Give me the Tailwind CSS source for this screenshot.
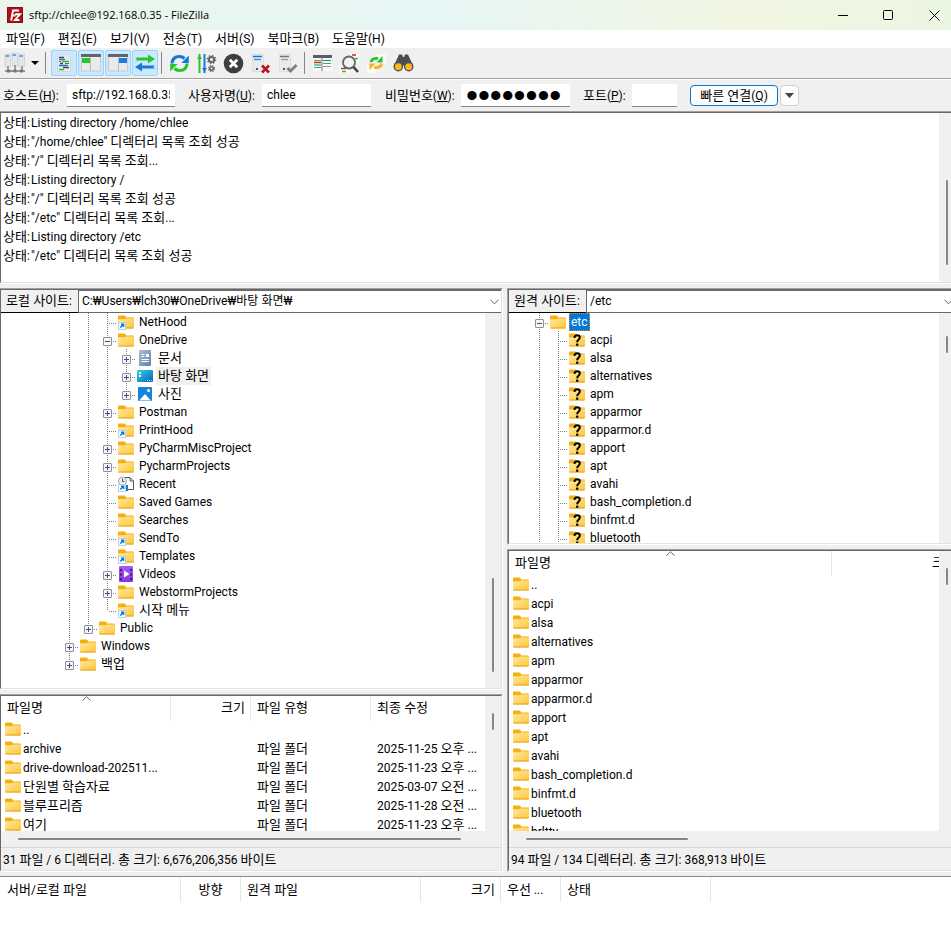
<!DOCTYPE html>
<html lang="ko">
<head>
<meta charset="utf-8">
<title>sftp://chlee@192.168.0.35 - FileZilla</title>
<script src="https://cdn.jsdelivr.net/npm/@tailwindcss/browser@4"></script>
</head>
<body class="bg-[#f0f0f0] text-black text-[12px] leading-[18px] font-['Roboto','Noto_Sans_CJK_KR',sans-serif] overflow-hidden">
<svg class="absolute size-0" aria-hidden="true">
  <defs>
    <linearGradient id="fg" x1="0" y1="0" x2="1" y2="1"><stop offset="0" stop-color="#ffe9a2"/><stop offset="1" stop-color="#ffc636"/></linearGradient>
    <linearGradient id="dg" x1="0" y1="0" x2="1" y2="1"><stop offset="0" stop-color="#35d3dc"/><stop offset="1" stop-color="#0a62c0"/></linearGradient>
    <linearGradient id="vg" x1="0" y1="0" x2="0" y2="1"><stop offset="0" stop-color="#a35cf0"/><stop offset="1" stop-color="#8338dd"/></linearGradient>
    <linearGradient id="tg" x1="0" y1="0" x2="1" y2="1"><stop offset="0" stop-color="#a9bfd8"/><stop offset="1" stop-color="#5f7fa8"/></linearGradient>
    <symbol id="folder" viewBox="0 0 16 16">
      <path d="M0 6V2.6Q0 1.6 1 1.6H6.2Q7 1.6 7.5 2.3L8.3 3.4H15Q16 3.4 16 4.4V7H0Z" fill="#f4b00c"/>
      <path d="M0 6Q0 5.2.8 5.2H6.4Q7.2 5.2 8 4.4H15Q16 4.2 16 5V13.4Q16 14.4 15 14.4H1Q0 14.4 0 13.4Z" fill="url(#fg)"/>
      <path d="M.4 14H15.6" stroke="#e5a01e"/>
    </symbol>
    <symbol id="badge" viewBox="0 0 16 16">
      <rect x=".5" y="8.5" width="7" height="7" fill="#fff" stroke="#b9cfe6"/>
      <path d="M2.2 13.6L5 10.8M3 10.3H5.6V13" stroke="#0078d4" stroke-width="1.4" fill="none"/>
    </symbol>
    <symbol id="link" viewBox="0 0 16 16"><use href="#folder"/><use href="#badge"/></symbol>
    <symbol id="unknown" viewBox="0 0 16 16"><use href="#folder"/>
      <path d="M5.4 5.8Q5.6 3.2 8.2 3.2Q10.8 3.2 10.8 5.5Q10.8 6.8 9.4 7.8Q8.2 8.6 8.2 10.2" fill="none" stroke="#000" stroke-width="2"/><rect x="7.1" y="11.6" width="2.2" height="2.2"/></symbol>
    <symbol id="doc" viewBox="0 0 16 16"><rect x="2" y="0" width="12" height="16" rx="1" fill="url(#tg)"/><path d="M4.500 4.500H7.500M4.500 6.500H7.500M4.500 9.500H12M4.500 11.500H12" stroke="#fff"/><rect x="9" y="4" width="3" height="3" fill="#fff"/></symbol>
    <symbol id="desktop" viewBox="0 0 16 16"><rect x="0" y="2" width="16" height="12" rx="1" fill="url(#dg)"/><path d="M2 4H4V6H2ZM2 7H4V9H2Z" fill="#fff"/><path d="M10 12.500H15" stroke="#9fe4f4" stroke-dasharray="1 1"/></symbol>
    <symbol id="picture" viewBox="0 0 16 16"><rect x="1" y="1" width="14" height="14" rx="1" fill="#1683d8"/><path d="M2.200 14.500L8 8L13.800 14.500Z" fill="#fff"/><circle cx="11.500" cy="4.500" r="1.500" fill="#fff"/></symbol>
    <symbol id="recent" viewBox="0 0 16 16"><path d="M6.500 1.500H12L15.500 5V13.500H6.500Z" fill="#fff" stroke="#555"/><path d="M12 1.500V5H15.500" fill="none" stroke="#555"/><path d="M9 9V15" stroke="#1976d2" stroke-width="2"/><circle cx="4.500" cy="5" r="4" fill="#eee" stroke="#aaa"/><path d="M4.500 2.500V5.500H6.500" fill="none" stroke="#555"/><use href="#badge"/></symbol>
    <symbol id="video" viewBox="0 0 16 16"><rect x="1" y="0" width="14" height="16" rx="1" fill="url(#vg)"/><path d="M3 3V14M13 3V14" stroke="#4a1590" stroke-width="2" stroke-dasharray="2 2.500"/><path d="M6 4.500L11.500 8L6 11.500Z" fill="#fff"/></symbol>
  </defs>
</svg>

<div class="flex flex-col h-screen">
  <header class="flex items-center h-[30px] shrink-0 pl-[7px] bg-[linear-gradient(90deg,#eaf6ec_0%,#e9f6ef_20%,#e6f6f5_45%,#f1f6e2_78%,#ebf6e3_100%)]">
    <svg class="size-4" viewBox="0 0 16 16" aria-hidden="true"><rect width="16" height="16" rx="1" fill="#b01117"/><path d="M.5 15.500V.5H15.500V15.500Z" fill="none" stroke="#8e0b10"/><path d="M4.200 13.500L6 3.500H12M5 8.500H8.500M8.200 7.200H13L8 13H12.500" fill="none" stroke="#fff" stroke-width="1.900"/></svg>
    <h1 class="flex-1 pl-[6px] text-[11px] font-['Open_Sans']">sftp://chlee@192.168.0.35 - FileZilla</h1>
    <div class="flex pr-[2px]">
      <button aria-label="최소화" class="w-[45px] grid place-items-center"><svg class="size-[11px]" viewBox="0 0 11 11"><path d="M0 5.500H10" stroke="#000"/></svg></button>
      <button aria-label="최대화" class="w-[45px] grid place-items-center"><svg class="size-[11px]" viewBox="0 0 11 11"><rect x=".5" y=".5" width="9" height="9" rx="1" fill="none" stroke="#000"/></svg></button>
      <button aria-label="닫기" class="w-[45px] pl-[2px] -mr-[7px] grid place-items-center"><svg class="size-[11px]" viewBox="0 0 11 11"><path d="M.5 .5L10.500 10.500M10.500 .5L.5 10.500" stroke="#000"/></svg></button>
    </div>
  </header>

  <nav class="flex h-[18px] shrink-0 bg-white pl-[6px] gap-[13px] leading-[19px]">
    <button>파일(F)</button><button>편집(E)</button><button>보기(V)</button><button>전송(T)</button><button>서버(S)</button><button>북마크(B)</button><button>도움말(H)</button>
  </nav>

  <div class="flex items-center h-[31px] shrink-0 border-b border-[#a0a0a0] pl-[4px]">
    <button aria-label="사이트 관리자" class="w-[22px]"><svg class="w-[22px] h-[22px]" viewBox="0 0 22 22"><g fill="#e4e6e8" stroke="#c4c8cc" stroke-width=".6"><rect x="1" y="2" width="5.500" height="13"/><rect x="8" y="1" width="5.500" height="13"/><rect x="15" y="2" width="5.500" height="13"/></g><path d="M1.500 4H5M8.500 3H12M15.500 4H19" stroke="#3a8ee0" stroke-width="1.500"/><path d="M4 14V20M11 13V20M18 14V20" stroke="#888" stroke-width="1.500"/><path d="M1 19H21" stroke="#777" stroke-width="1.500"/><path d="M3 17.500H6V20.500H3ZM9.500 17.500H12.500V20.500H9.500ZM16 17.500H19V20.500H16Z" fill="#777"/></svg></button>
    <button aria-label="사이트 목록" class="w-[18px] grid place-items-center"><svg class="w-2 h-1" viewBox="0 0 8 4"><path d="M0 0H8L4 4Z"/></svg></button>
    <span class="w-px h-[22px] bg-[#868686] mx-[1px]"></span>
    <div class="flex items-center pl-[4px] pr-[3px] gap-px">
      <button aria-label="메시지 로그" class="size-[26px] grid place-items-center rounded-[2px] border border-[#99d1ff] bg-[#cce8ff]"><svg class="size-5" viewBox="0 0 20 20"><path d="M3.500 1.500H13L16.500 5V18.500H3.500Z" fill="#e9eaec" stroke="#d4d8dc"/><path d="M5 4.500H10M6 10.500H9M9 14.500H15" stroke="#444" stroke-width="1.300"/><path d="M5 6.500H11M5 12.500H14" stroke="#1f74d2" stroke-width="1.300"/><path d="M8 8.500H15M5 16.500H10" stroke="#28b83c" stroke-width="1.300"/><path d="M11 10.500H15M5 8.500H7" stroke="#666"/></svg></button>
      <button aria-label="로컬 디렉터리 트리" class="size-[26px] grid place-items-center rounded-[2px] border border-[#99d1ff] bg-[#cce8ff]"><svg class="size-5" viewBox="0 0 20 20"><rect x=".5" y="2" width="19" height="16" fill="#e9eaec" stroke="#c8cbce"/><rect x="0" y="1" width="20" height="3" fill="#62666b"/><rect x="1" y="5" width="8" height="5" fill="#27c52c"/><path d="M9.500 4V18" stroke="#bbb"/></svg></button>
      <button aria-label="원격 디렉터리 트리" class="size-[26px] grid place-items-center rounded-[2px] border border-[#99d1ff] bg-[#cce8ff]"><svg class="size-5" viewBox="0 0 20 20"><rect x=".5" y="2" width="19" height="16" fill="#e9eaec" stroke="#c8cbce"/><rect x="0" y="1" width="20" height="3" fill="#62666b"/><rect x="11" y="5" width="8" height="5" fill="#1f7be0"/><path d="M10.500 4V18" stroke="#bbb"/></svg></button>
      <button aria-label="전송 대기열" class="size-[26px] grid place-items-center rounded-[2px] border border-[#99d1ff] bg-[#cce8ff]"><svg class="size-5" viewBox="0 0 20 20"><path d="M0 4.500H13V1.500L20 6L13 10.500V7.500H0L2 6Z" fill="#27c52c"/><path d="M20 12.500H7V9.500L0 14L7 18.500V15.500H20L18 14Z" fill="#1a76d8"/></svg></button>
    </div>
    <span class="w-px h-[22px] bg-[#868686] mr-[7px]"></span>
    <div class="flex items-center gap-[6px]">
      <button aria-label="새로 고침"><svg class="size-[21px]" viewBox="0 0 21 21"><path d="M3 10.500Q3.500 3.500 10.500 3.500Q13.500 3.500 15.500 5.500" fill="none" stroke="#1a76d8" stroke-width="3.200"/><path d="M19.800 2.500V10H12.300Z" fill="#1a76d8"/><path d="M18 10.500Q17.500 17.500 10.500 17.500Q7.500 17.500 5.500 15.500" fill="none" stroke="#27c52c" stroke-width="3.200"/><path d="M1.200 18.500V11H8.700Z" fill="#27c52c"/></svg></button>
      <button aria-label="대기열 처리"><svg class="size-[21px]" viewBox="0 0 21 21"><path d="M3.500 1V20" stroke="#27c52c" stroke-width="2"/><path d="M1 6H6L3.500 2Z" fill="#27c52c"/><path d="M8.500 1V20" stroke="#1a76d8" stroke-width="2"/><path d="M6 15H11L8.500 19Z" fill="#1a76d8"/><g fill="none" stroke="#666"><circle cx="15.500" cy="6.500" r="2.600" stroke-width="2"/><circle cx="15.500" cy="6.500" r="4" stroke-width="1.500" stroke-dasharray="1.500 1.600"/><circle cx="15.500" cy="15.500" r="1.800" stroke-width="1.600"/><circle cx="15.500" cy="15.500" r="3" stroke-width="1.200" stroke-dasharray="1.200 1.200"/></g></svg></button>
      <button aria-label="취소"><svg class="size-[21px]" viewBox="0 0 21 21"><circle cx="10.500" cy="10.500" r="9.800" fill="#3c3f42"/><path d="M6.800 6.800L14.200 14.200M14.200 6.800L6.800 14.200" stroke="#fff" stroke-width="2.800"/></svg></button>
      <button aria-label="연결 끊기"><svg class="size-[21px]" viewBox="0 0 21 21"><rect x="2.500" y="1.500" width="11" height="17" fill="#e8eaec" stroke="#dcdfe2"/><path d="M3 3.500H12" stroke="#1a76d8" stroke-width="1.500"/><path d="M4 6.500H11" stroke="#3d8ae0" stroke-width="1.300"/><rect x="6" y="15" width="2" height="2" fill="#555"/><path d="M12 12.500L19 19.500M19 12.500L12 19.500" stroke="#b8141c" stroke-width="2.600"/></svg></button>
      <button aria-label="다시 연결"><svg class="size-[21px]" viewBox="0 0 21 21"><rect x="2.500" y="1.500" width="11" height="17" fill="#e8eaec" stroke="#dcdfe2"/><path d="M3 3.500H12" stroke="#777" stroke-width="1.500"/><path d="M4 6.500H11" stroke="#999" stroke-width="1.300"/><rect x="6" y="15" width="2" height="2" fill="#555"/><path d="M10.500 15L13.500 18L19.500 12" fill="none" stroke="#7c8084" stroke-width="2.800"/></svg></button>
    </div>
    <span class="w-px h-[22px] bg-[#868686] ml-[6px] mr-[7px]"></span>
    <div class="flex items-center gap-[6px]">
      <button aria-label="필터"><svg class="size-[21px]" viewBox="0 0 21 21"><rect x="1" y="2" width="19" height="16" fill="#fafafa"/><rect x="1" y="2" width="19" height="3" fill="#5a5e62"/><path d="M2 7.500H9M2 14.500H9M11 10.500H19" stroke="#27c52c" stroke-width="1.200"/><path d="M2 9.500H9" stroke="#d1242c" stroke-width="1.500"/><path d="M2 12H9M11 7.500H19" stroke="#1a76d8" stroke-width="1.200"/><path d="M11 13.500H19" stroke="#999"/><path d="M10 5V18" stroke="#777"/></svg></button>
      <button aria-label="디렉터리 비교"><svg class="size-[21px]" viewBox="0 0 21 21"><path d="M11 1H20V10H11ZM1 12H10V20H1Z" fill="#fafafa"/><path d="M13 2H17" stroke="#d1242c" stroke-width="1.500"/><path d="M16 5.500H19M3 18.500H7" stroke="#27c52c" stroke-width="1.500"/><path d="M2 15.500H7" stroke="#d1242c" stroke-width="1.500"/><circle cx="10" cy="9.500" r="6" fill="#eef3f6" stroke="#62666b" stroke-width="1.800"/><path d="M14.500 14L19 19" stroke="#3c3f42" stroke-width="2.600"/></svg></button>
      <button aria-label="동기화 탐색"><svg class="size-[21px]" viewBox="0 0 21 21"><path d="M11 1H20V10H11ZM1 12H10V20H1Z" fill="#fafafa"/><path d="M16.500 3V9.500H10.500Z" fill="#27c52c"/><path d="M5 9Q6 4.800 12 5.500" fill="none" stroke="#27c52c" stroke-width="2.800"/><path d="M15.500 10.500Q15 15 8 14.500" fill="none" stroke="#f5b417" stroke-width="2.800"/><path d="M3.500 17V10.500H9.500Z" fill="#f5b417"/></svg></button>
      <button aria-label="파일 검색"><svg class="size-[21px]" viewBox="0 0 21 21"><path d="M6 1.500H9L10 4H11L12 1.500H15L20 12.500H1Z" fill="#4b4f54"/><circle cx="5.300" cy="13.700" r="4.800" fill="#4b4f54"/><circle cx="15.700" cy="13.700" r="4.800" fill="#4b4f54"/><circle cx="5.300" cy="13.700" r="3.400" fill="#fbb916"/><circle cx="15.700" cy="13.700" r="3.400" fill="#fbb916"/></svg></button>
    </div>
  </div>

  <form class="flex items-center h-[32px] shrink-0 border-t border-white pl-[3px]" onsubmit="return false">
    <label for="host" class="w-[64px] shrink-0">호스트(<u>H</u>):</label>
    <input id="host" value="sftp://192.168.0.35" class="w-[108px] h-[23px] px-[5px] bg-white border-b border-[#868686] outline-none">
    <label for="user" class="w-[74px] ml-[13px] shrink-0">사용자명(<u>U</u>):</label>
    <input id="user" value="chlee" class="w-[109px] h-[23px] px-[5px] bg-white border-b border-[#868686] outline-none">
    <label for="pass" class="w-[76px] ml-[14px] shrink-0">비밀번호(<u>W</u>):</label>
    <input id="pass" type="password" value="password" class="w-[109px] h-[23px] px-[5px] bg-white border-b border-[#868686] outline-none font-['Liberation_Sans'] text-[34px] leading-[22px]">
    <label for="port" class="w-[49px] ml-[13px] shrink-0">포트(<u>P</u>):</label>
    <input id="port" class="w-[45px] h-[23px] px-[5px] bg-white border-b border-[#868686] outline-none">
    <button class="w-[88px] h-[21px] ml-[13px] rounded-[4px] border border-[#0078d4] bg-[#fdfdfd]">빠른 연결(<u>Q</u>)</button>
    <button aria-label="최근 연결" class="w-[19px] h-[21px] ml-[2px] rounded-[4px] border border-[#d0d0d0] bg-[#fdfdfd] grid place-items-center"><svg class="w-[9px] h-[5px]" viewBox="0 0 9 5"><path d="M0 0H9L4.500 5Z" fill="#444"/></svg></button>
  </form>

  <section aria-label="메시지 로그" class="flex h-[173px] shrink-0 border-t border-t-[#a0a0a0] border-b border-b-white">
    <div class="flex flex-1 border-l border-t border-l-[#696969] border-t-[#696969] border-b border-b-[#e3e3e3] bg-white">
      <div id="log" class="flex-1 pl-[2px] pt-px leading-[19px]"></div>
      <div class="w-[12px] bg-[#f0f0f0] flex flex-col"><span class="w-[2px] h-[85px] ml-[7px] mt-[67px] bg-[#868686] rounded"></span></div>
    </div>
  </section>

  <main class="flex flex-1 min-h-0 mt-[4px]">
    <div class="flex flex-col basis-0 grow-[503] min-w-0 mr-[4px]">
      <section aria-label="로컬 트리" class="flex flex-col flex-1 min-h-0 border-t border-t-[#a0a0a0] border-b border-b-white border-r border-r-white">
        <div class="flex flex-col flex-1 min-h-0 border-l border-t border-l-[#696969] border-t-[#696969] border-r border-b border-r-[#e3e3e3] border-b-[#e3e3e3] bg-white">
          <div class="flex h-[23px] shrink-0">
            <label for="local" class="w-[77px] pl-[5px] leading-[22px] bg-[#f0f0f0] border-b border-black shrink-0">로컬 사이트:</label>
            <div class="relative flex-1 min-w-0 border border-r-0 border-[#696969]">
              <select id="local" class="appearance-none w-full h-full pl-[3px] pb-[2px] outline-none"><option>C:₩Users₩lch30₩OneDrive₩바탕 화면₩</option></select>
              <svg class="absolute right-[2px] top-[8px] w-[9px] h-[6px] pointer-events-none" viewBox="0 0 9 6"><path d="M.5 .8L4.500 4.800L8.500 .8" fill="none" stroke="#666"/></svg>
            </div>
          </div>
          <div class="flex flex-1 min-h-0">
            <ul id="ltree" class="flex-1 min-w-0 overflow-hidden pl-[59px]"></ul>
            <div class="w-[16px] bg-[#f0f0f0] flex flex-col justify-end"><span class="w-[2px] h-[94px] ml-[7px] mb-[16px] bg-[#868686] rounded"></span></div>
          </div>
        </div>
      </section>
      <section aria-label="로컬 파일" class="flex flex-col h-[178px] shrink-0 mt-[4px] border-t border-t-[#a0a0a0] border-b border-b-white border-r border-r-white">
        <div class="flex flex-col flex-1 min-h-0 border-l border-t border-l-[#696969] border-t-[#696969] border-r border-b border-r-[#e3e3e3] border-b-[#e3e3e3]">
          <div class="flex flex-1 min-h-0">
            <div class="relative flex-1 min-w-0 overflow-hidden bg-white">
              <svg class="absolute left-[81px] top-0 w-[9px] h-[5px]" viewBox="0 0 9 5"><path d="M.5 4.500L4.500 .7L8.500 4.500" fill="none" stroke="#666"/></svg>
              <table class="table-fixed w-full border-separate border-spacing-0 leading-[19px]">
                <colgroup><col class="w-[170px]"><col class="w-[80px]"><col class="w-[120px]"><col></colgroup>
                <thead><tr class="h-[25px]"><th class="font-normal text-left p-0 pl-[6px] border-r border-[#e5e5e5]">파일명</th><th class="font-normal text-right p-0 pr-[5px] border-r border-[#e5e5e5]">크기</th><th class="font-normal text-left p-0 pl-[6px] border-r border-[#e5e5e5]">파일 유형</th><th class="font-normal text-left p-0 pl-[6px]">최종 수정</th></tr></thead>
                <tbody id="lfiles"></tbody>
              </table>
            </div>
            <div class="w-[16px] bg-[#f0f0f0] flex flex-col"><span class="w-[2px] h-[17px] ml-[7px] mt-[17px] bg-[#868686] rounded"></span></div>
          </div>
          <div class="h-[16px] shrink-0 pt-[7px] pl-[17px] pr-[40px]"><span class="block h-[2px] bg-[#868686] rounded"></span></div>
          <p class="h-[23px] shrink-0 border-t border-[#d7d7d7] pl-[2px] leading-[24px]">31 파일 / 6 디렉터리. 총 크기: 6,676,206,356 바이트</p>
        </div>
      </section>
    </div>

    <div class="flex flex-col basis-0 grow-[444] min-w-0">
      <section aria-label="원격 트리" class="flex flex-col h-[257px] shrink-0 border-t border-l border-t-[#a0a0a0] border-l-[#a0a0a0] border-b border-b-white">
        <div class="flex flex-col flex-1 min-h-0 border-l border-t border-l-[#696969] border-t-[#696969] border-b border-b-[#e3e3e3] bg-white">
          <div class="flex h-[23px] shrink-0">
            <label for="remote" class="w-[77px] pl-[5px] leading-[22px] bg-[#f0f0f0] border-b border-black shrink-0">원격 사이트:</label>
            <div class="relative flex-1 min-w-0 border border-r-0 border-[#696969] overflow-hidden">
              <select id="remote" class="appearance-none w-full h-full pl-[3px] pb-[2px] outline-none"><option>/etc</option></select>
              <svg class="absolute -right-[2px] top-[8px] w-[9px] h-[6px] pointer-events-none" viewBox="0 0 9 6"><path d="M.5 .8L4.500 4.800L8.500 .8" fill="none" stroke="#666"/></svg>
            </div>
          </div>
          <div class="flex flex-1 min-h-0">
            <ul id="rtree" class="flex-1 min-w-0 overflow-hidden pl-[21px]"></ul>
            <div class="w-[12px] bg-[#f0f0f0] flex flex-col"><span class="w-[2px] h-[17px] ml-[7px] mt-[23px] bg-[#868686] rounded"></span></div>
          </div>
        </div>
      </section>
      <section aria-label="원격 파일" class="flex flex-col flex-1 min-h-0 mt-[4px] border-t border-l border-t-[#a0a0a0] border-l-[#a0a0a0] border-b border-b-white">
        <div class="flex flex-col flex-1 min-h-0 border-l border-t border-l-[#696969] border-t-[#696969] border-b border-b-[#e3e3e3]">
          <div class="flex flex-1 min-h-0">
            <div class="relative flex-1 min-w-0 overflow-hidden bg-white">
              <svg class="absolute left-[157px] top-0 w-[9px] h-[5px]" viewBox="0 0 9 5"><path d="M.5 4.500L4.500 .7L8.500 4.500" fill="none" stroke="#666"/></svg>
              <table class="table-fixed w-[453px] border-separate border-spacing-0 leading-[19px]">
                <colgroup><col class="w-[323px]"><col class="w-[130px]"></colgroup>
                <thead><tr class="h-[25px]"><th class="font-normal text-left p-0 pl-[6px] border-r border-[#e5e5e5]">파일명</th><th class="font-normal text-right p-0 pr-[6px]">크기</th></tr></thead>
                <tbody id="rfiles"></tbody>
              </table>
            </div>
            <div class="w-[12px] bg-[#f0f0f0] flex flex-col"><span class="w-[2px] h-[17px] ml-[7px] mt-[17px] bg-[#868686] rounded"></span></div>
          </div>
          <div class="h-[16px] shrink-0 pt-[7px] pl-[17px]"><span class="block w-[162px] h-[2px] bg-[#868686] rounded"></span></div>
          <p class="h-[23px] shrink-0 border-t border-[#d7d7d7] pl-[2px] leading-[24px]">94 파일 / 134 디렉터리. 총 크기: 368,913 바이트</p>
        </div>
      </section>
    </div>
  </main>

  <section aria-label="대기열" class="h-[50px] shrink-0 mt-[4px] border-t border-[#828790] bg-white">
    <table class="table-fixed w-[711px] border-separate border-spacing-0">
      <colgroup><col class="w-[181px]"><col class="w-[60px]"><col class="w-[180px]"><col class="w-[80px]"><col class="w-[60px]"><col class="w-[150px]"></colgroup>
      <thead><tr class="h-[25px]"><th class="font-normal text-left p-0 pl-[7px] border-r border-[#e5e5e5]">서버/로컬 파일</th><th class="font-normal p-0 border-r border-[#e5e5e5]">방향</th><th class="font-normal text-left p-0 pl-[6px] border-r border-[#e5e5e5]">원격 파일</th><th class="font-normal text-right p-0 pr-[5px] border-r border-[#e5e5e5]">크기</th><th class="font-normal text-left p-0 pl-[6px] border-r border-[#e5e5e5]">우선 ...</th><th class="font-normal text-left p-0 pl-[6px] border-r border-[#e5e5e5]">상태</th></tr></thead>
    </table>
  </section>
</div>

<script>
const $ = id => document.getElementById(id);
const icon = name => `<svg class="size-4 shrink-0" viewBox="0 0 16 16" aria-hidden="true"><use href="#${name}"/></svg>`;

$('log').innerHTML = ['Listing directory /home/chlee', '"/home/chlee" 디렉터리 목록 조회 성공', '"/" 디렉터리 목록 조회...', 'Listing directory /', '"/" 디렉터리 목록 조회 성공', '"/etc" 디렉터리 목록 조회...', 'Listing directory /etc', '"/etc" 디렉터리 목록 조회 성공']
  .map(t => `<p class="flex"><span class="w-[28px] shrink-0 whitespace-nowrap">상태:</span><span>${t}</span></p>`).join('');

// One character per indent cell: | = line, + or - = expander, e = last expander, t = branch, L = last branch.
function cell(c) {
  const end = c === 'L' || c === 'e' ? 10 : 18;
  let s = `<path d="M9.500 0V${end}" stroke="#808080" stroke-dasharray="1 1"/>`;
  if (c !== '|') s += '<path d="M11 10.500H20" stroke="#808080" stroke-dasharray="1 1"/>';
  if ('+-e'.includes(c)) {
    s += '<rect x="5.500" y="6.500" width="8" height="8" rx=".5" fill="#f6f6f6" stroke="#919191"/><path d="M7 10.500H12" stroke="#34519b"/>';
    if (c !== '-') s += '<path d="M9.500 8V13" stroke="#34519b"/>';
  }
  return `<svg class="w-[19px] h-[18px] shrink-0" viewBox="0 0 19 18">${s}</svg>`;
}
const row = ([cells, ic, name, mark]) => {
  const look = mark === 'sel' ? 'bg-[#0078d7] text-white outline-1 -outline-offset-1 outline-dotted outline-[#ff8728] px-[2px] ml-[3px]'
    : mark === 'dim' ? 'bg-[#f0f0f0] px-[2px] ml-[3px]' : 'ml-[5px]';
  return `<li class="flex h-[18px] whitespace-nowrap">${[...cells].map(cell).join('')}<span class="flex items-center pl-px">${icon(ic)}</span><span class="${look}">${name}</span></li>`;
};
$('ltree').innerHTML = [
  ['||t', 'link', 'NetHood'], ['||-', 'folder', 'OneDrive'], ['|||+', 'doc', '문서'], ['|||+', 'desktop', '바탕 화면', 'dim'], ['|||e', 'picture', '사진'],
  ['||+', 'folder', 'Postman'], ['||t', 'link', 'PrintHood'], ['||+', 'folder', 'PyCharmMiscProject'], ['||+', 'folder', 'PycharmProjects'],
  ['||t', 'recent', 'Recent'], ['||t', 'folder', 'Saved Games'], ['||t', 'folder', 'Searches'], ['||t', 'link', 'SendTo'], ['||t', 'link', 'Templates'],
  ['||+', 'video', 'Videos'], ['||+', 'folder', 'WebstormProjects'], ['||L', 'link', '시작 메뉴'], ['|e', 'folder', 'Public'], ['+', 'folder', 'Windows'], ['e', 'folder', '백업']
].map(row).join('');

const dirs = ['acpi', 'alsa', 'alternatives', 'apm', 'apparmor', 'apparmor.d', 'apport', 'apt', 'avahi', 'bash_completion.d', 'binfmt.d', 'bluetooth'];
$('rtree').innerHTML = [['-', 'folder', 'etc', 'sel'], ...dirs.map(d => ['|t', 'unknown', d])].map(row).join('');

const nameCell = n => `<td class="p-0 pl-[4px]"><span class="flex h-[19px] gap-[2px] whitespace-nowrap">${icon('folder')}<span>${n}</span></span></td>`;
$('lfiles').innerHTML = [['..'], ['archive', '2025-11-25 오후 ...'], ['drive-download-202511...', '2025-11-23 오후 ...'], ['단원별 학습자료', '2025-03-07 오전 ...'], ['블루프리즘', '2025-11-28 오전 ...'], ['여기', '2025-11-23 오후 ...']]
  .map(([n, d]) => `<tr class="h-[19px]">${nameCell(n)}<td class="p-0"></td><td class="p-0 pl-[6px]">${d ? '파일 폴더' : ''}</td><td class="p-0 pl-[6px] whitespace-nowrap">${d || ''}</td></tr>`).join('');
$('rfiles').innerHTML = ['..', ...dirs, 'brltty'].map(n => `<tr class="h-[19px]">${nameCell(n)}<td class="p-0"></td></tr>`).join('');

// Hangul runs are set one size larger than the Latin text beside them.
const walker = document.createTreeWalker(document.body, NodeFilter.SHOW_TEXT);
const found = [];
while (walker.nextNode()) {
  const n = walker.currentNode;
  if (/[가-힣]/.test(n.data) && !n.parentElement.closest('script,option')) found.push(n);
}
for (const n of found) {
  const parts = n.data.split(/([가-힣]+(?: +[가-힣]+)*)/).map(p => {
    if (!/[가-힣]/.test(p)) return p;
    const s = document.createElement('span');
    s.className = 'text-[13px] leading-none';
    s.textContent = p;
    return s;
  });
  n.replaceWith(...parts);
}
</script>
</body>
</html>
